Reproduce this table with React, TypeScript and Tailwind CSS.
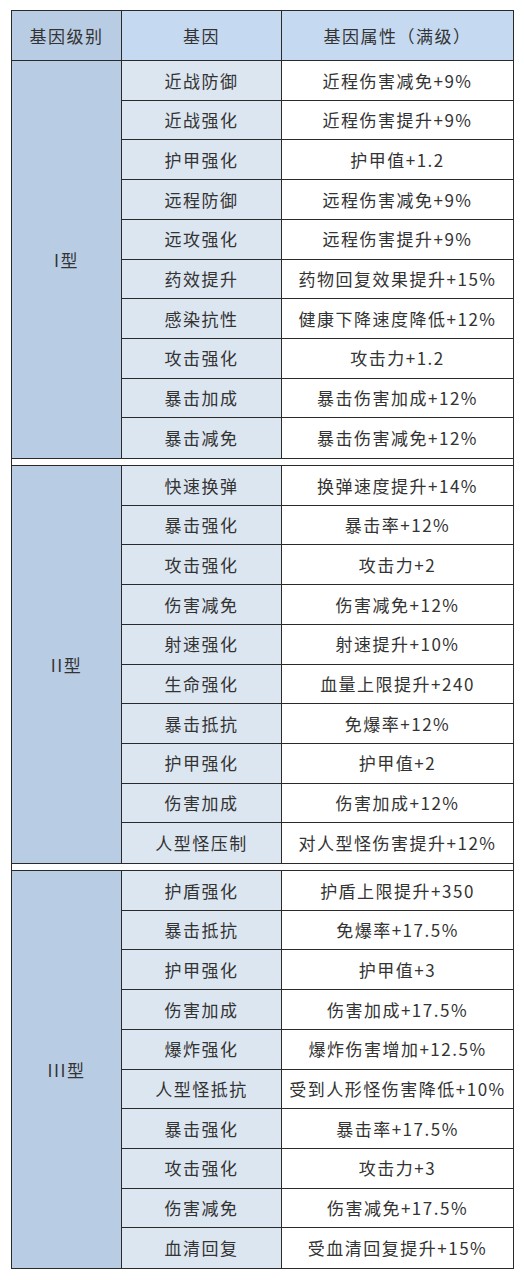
import React from "react";

const groups: { name: string; rows: [string, string][] }[] = [
  {
    name: "I型",
    rows: [
      ["近战防御", "近程伤害减免+9%"],
      ["近战强化", "近程伤害提升+9%"],
      ["护甲强化", "护甲值+1.2"],
      ["远程防御", "远程伤害减免+9%"],
      ["远攻强化", "远程伤害提升+9%"],
      ["药效提升", "药物回复效果提升+15%"],
      ["感染抗性", "健康下降速度降低+12%"],
      ["攻击强化", "攻击力+1.2"],
      ["暴击加成", "暴击伤害加成+12%"],
      ["暴击减免", "暴击伤害减免+12%"],
    ],
  },
  {
    name: "II型",
    rows: [
      ["快速换弹", "换弹速度提升+14%"],
      ["暴击强化", "暴击率+12%"],
      ["攻击强化", "攻击力+2"],
      ["伤害减免", "伤害减免+12%"],
      ["射速强化", "射速提升+10%"],
      ["生命强化", "血量上限提升+240"],
      ["暴击抵抗", "免爆率+12%"],
      ["护甲强化", "护甲值+2"],
      ["伤害加成", "伤害加成+12%"],
      ["人型怪压制", "对人型怪伤害提升+12%"],
    ],
  },
  {
    name: "III型",
    rows: [
      ["护盾强化", "护盾上限提升+350"],
      ["暴击抵抗", "免爆率+17.5%"],
      ["护甲强化", "护甲值+3"],
      ["伤害加成", "伤害加成+17.5%"],
      ["爆炸强化", "爆炸伤害增加+12.5%"],
      ["人型怪抵抗", "受到人形怪伤害降低+10%"],
      ["暴击强化", "暴击率+17.5%"],
      ["攻击强化", "攻击力+3"],
      ["伤害减免", "伤害减免+17.5%"],
      ["血清回复", "受血清回复提升+15%"],
    ],
  },
];

export default function App() {
  return (
    <div
      className="w-[524px] h-[1280px] bg-white pt-[10px] pl-[11px] text-[#333] text-[17px] tracking-[1.5px]"
      style={{ fontFamily: '"Noto Sans CJK SC", "Noto Sans", sans-serif' }}
    >
      <div className="w-[503px] border border-[#2a2a2a]">
        <div className="grid grid-cols-[110px_160px_1fr] h-[50px] border-b border-[#2a2a2a]">
          <div className="bg-[#b8cce4] border-r border-[#2a2a2a] flex items-center justify-center">基因级别</div>
          <div className="bg-[#c5d9f1] border-r border-[#2a2a2a] flex items-center justify-center">基因</div>
          <div className="bg-[#c5d9f1] flex items-center justify-center">基因属性（满级）</div>
        </div>
        {groups.map((g, gi) => (
          <React.Fragment key={g.name}>
            {gi > 0 && <div className="h-[8px] bg-white border-y border-[#2a2a2a]" />}
            <div className="grid grid-cols-[110px_1fr] h-[397px]">
              <div className="bg-[#b8cce4] border-r border-[#2a2a2a] flex items-center justify-center">{g.name}</div>
              <div className="grid grid-rows-10">
                {g.rows.map(([a, b], i) => (
                  <div
                    key={i}
                    className={`grid grid-cols-[160px_1fr] ${i < g.rows.length - 1 ? "border-b border-[#2a2a2a]" : ""}`}
                  >
                    <div className="bg-[#dce6f1] border-r border-[#2a2a2a] flex items-center justify-center whitespace-nowrap">{a}</div>
                    <div className="bg-white flex items-center justify-center whitespace-nowrap">{b}</div>
                  </div>
                ))}
              </div>
            </div>
          </React.Fragment>
        ))}
      </div>
    </div>
  );
}
